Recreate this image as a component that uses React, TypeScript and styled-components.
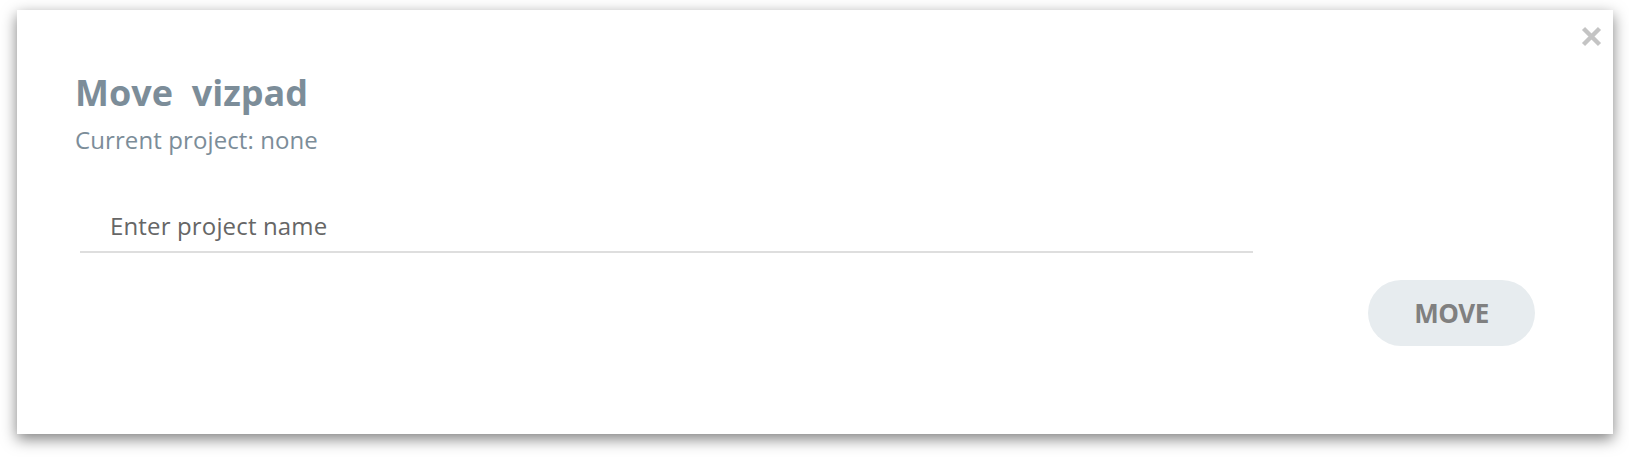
import React from "react";
import styled, { createGlobalStyle } from "styled-components";

const GlobalStyle = createGlobalStyle`
  html, body {
    margin: 0;
    padding: 0;
    background: #ffffff;
  }
  body {
    font-family: "Open Sans", "Noto Sans", Arial, sans-serif;
  }
`;

const Page = styled.div`
  padding: 10px 16px 23px 17px;
`;

const Dialog = styled.div`
  position: relative;
  box-sizing: border-box;
  width: 1596px;
  height: 424px;
  background: #ffffff;
  box-shadow: 0 5px 14px rgba(0, 0, 0, 0.5);
  padding: 61px 78px 0 58px;
  display: flex;
  flex-direction: column;
`;

const CloseButton = styled.button`
  position: absolute;
  top: 16px;
  right: 11px;
  width: 21px;
  height: 21px;
  padding: 0;
  border: none;
  background: transparent;
  cursor: pointer;
  display: flex;
`;

const Title = styled.h2`
  margin: 0;
  font-size: 36px;
  line-height: 1.2;
  font-weight: 700;
  color: #7c8d99;
  white-space: pre;
`;

const Subtitle = styled.p`
  margin: 9px 0 0;
  font-size: 24px;
  line-height: 1.4;
  font-weight: 400;
  letter-spacing: 0.1px;
  color: #7c8d99;
`;

const NameInput = styled.input`
  box-sizing: border-box;
  margin: 43px 0 0 5px;
  width: 1173px;
  height: 53px;
  padding: 0 0 0 30px;
  border: none;
  border-bottom: 2px solid #dedede;
  outline: none;
  background: transparent;
  font-family: "Open Sans", "Noto Sans", Arial, sans-serif;
  font-size: 24px;
  letter-spacing: 0.15px;
  color: #333;

  &::placeholder {
    color: #666666;
    opacity: 1;
  }
`;

const Footer = styled.div`
  display: flex;
  justify-content: flex-end;
  margin-top: 27px;
`;

const PrimaryButton = styled.button`
  width: 167px;
  height: 66px;
  border: none;
  border-radius: 33px;
  background: #e7ecef;
  color: #808080;
  font-family: "Open Sans", "Noto Sans", Arial, sans-serif;
  font-size: 26px;
  font-weight: 700;
  letter-spacing: -0.5px;
  cursor: pointer;
  display: flex;
  align-items: center;
  justify-content: center;
`;

const CloseIcon = () => (
  <svg width="21" height="21" viewBox="0 0 21 21" aria-hidden="true">
    <path
      d="M2.5 2.5 L18.5 18.5 M18.5 2.5 L2.5 18.5"
      stroke="#c4c4c4"
      strokeWidth="4.4"
      strokeLinecap="butt"
      fill="none"
    />
  </svg>
);

export default function App() {
  return (
    <>
      <GlobalStyle />
      <Page>
        <Dialog>
          <CloseButton aria-label="Close">
            <CloseIcon />
          </CloseButton>
          <Title>{"Move  vizpad"}</Title>
          <Subtitle>Current project: none</Subtitle>
          <NameInput placeholder="Enter project name" />
          <Footer>
            <PrimaryButton>MOVE</PrimaryButton>
          </Footer>
        </Dialog>
      </Page>
    </>
  );
}
